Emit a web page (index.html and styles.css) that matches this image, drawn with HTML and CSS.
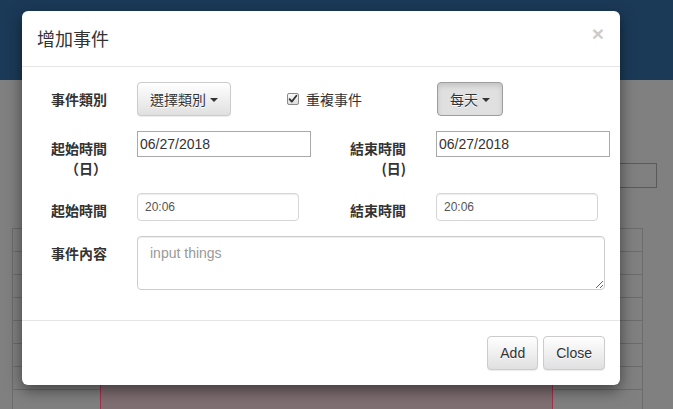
FILE: index.html
```html
<!DOCTYPE html>
<html lang="zh-Hant">
<head>
<meta charset="utf-8">
<title>增加事件</title>
<link rel="stylesheet" href="styles.css">
</head>
<body>
<div class="page">
  <div class="navbar"></div>
  <div class="toolbar"><div class="search"></div></div>
  <div class="calendar">
    <div class="event-block"></div>
  </div>
</div>

<div class="modal">
  <div class="modal-header">
    <span class="close">×</span>
    <h4 class="modal-title">增加事件</h4>
  </div>
  <div class="modal-body">
    <div class="row row-first">
      <label class="control-label">事件類別</label>
      <button class="btn">選擇類別 <span class="caret"></span></button>
      <span class="check">
        <svg class="checkbox" width="12" height="12" viewBox="0 0 12 12">
          <defs>
            <linearGradient id="cbg" x1="0" y1="0" x2="0" y2="1">
              <stop offset="0" stop-color="#fbfbfb"/>
              <stop offset="1" stop-color="#dcdcdc"/>
            </linearGradient>
          </defs>
          <rect x="0.5" y="0.5" width="11" height="11" rx="1.5" fill="url(#cbg)" stroke="#8a8a8a"/>
          <path d="M2.6 6.2 L4.8 8.6 L9.4 2.8" fill="none" stroke="#333" stroke-width="1.8" stroke-linecap="round" stroke-linejoin="round"/>
        </svg>
        <span class="check-text">重複事件</span>
      </span>
      <button class="btn btn-active">每天 <span class="caret"></span></button>
    </div>
    <div class="row grid">
      <label class="control-label">起始時間（日）</label>
      <input class="date-input" type="text" value="06/27/2018">
      <label class="control-label">結束時間(日)</label>
      <input class="date-input" type="text" value="06/27/2018">
    </div>
    <div class="row grid">
      <label class="control-label">起始時間</label>
      <input class="time-input" type="text" value="20:06">
      <label class="control-label">結束時間</label>
      <input class="time-input" type="text" value="20:06">
    </div>
    <div class="row grid">
      <label class="control-label">事件內容</label>
      <textarea class="content-input" placeholder="input things"></textarea>
    </div>
  </div>
  <div class="modal-footer">
    <button class="btn">Add</button>
    <button class="btn">Close</button>
  </div>
</div>
</body>
</html>
```
FILE: styles.css
```css
html, body {
  margin: 0;
  padding: 0;
}
body {
  width: 673px;
  height: 409px;
  overflow: hidden;
  background: #808080;
  font-family: "Liberation Sans", "Noto Sans CJK TC", sans-serif;
  font-size: 14px;
  color: #333;
  position: relative;
}

/* background page (seen under backdrop) */
.page {
  height: 409px;
  display: flex;
  flex-direction: column;
  overflow: hidden;
}
.navbar {
  height: 80px;
  background: #1b3a58;
  flex: none;
}
.toolbar {
  display: flex;
  justify-content: flex-end;
  padding: 83px 16px 0 0;
  flex: none;
}
.search {
  width: 180px;
  height: 23px;
  border: 1px solid #5a5a5a;
}
.calendar {
  flex: 1;
  min-height: 0;
  display: flex;
  flex-direction: column;
  margin: 40px 0 0 12px;
  width: 629px;
  border-left: 1px solid #6c6c6c;
  border-right: 1px solid #6c6c6c;
  background: repeating-linear-gradient(to bottom, #6c6c6c 0, #6c6c6c 1px, transparent 1px, transparent 23px);
}
.event-block {
  flex: 1;
  margin: 100px 0 0 87px;
  width: 451px;
  background: #7f6e72;
  border: 1px solid #a3304f;
  border-bottom: none;
}

/* modal */
.modal {
  position: absolute;
  left: 22px;
  top: 11px;
  width: 598px;
  background: #fff;
  border-radius: 6px;
  box-shadow: 0 5px 15px rgba(0, 0, 0, 0.5);
}
.modal-header {
  padding: 15px;
  border-bottom: 1px solid #e5e5e5;
}
.modal-title {
  margin: 0;
  font-family: "Noto Sans CJK TC", sans-serif;
  font-size: 18px;
  font-weight: 400;
  line-height: 25px;
  color: #333;
}
.close {
  float: right;
  font-family: "Liberation Sans", sans-serif;
  font-size: 21px;
  font-weight: 700;
  line-height: 1;
  color: #000;
  opacity: 0.2;
  margin-top: -3px;
  margin-right: 1px;
}
.modal-body {
  padding: 15px 10px 15px 15px;
}
.row {
  margin-bottom: 15px;
}
.row-first {
  display: flex;
  align-items: flex-start;
}
.grid {
  display: grid;
  grid-template-columns: 70px 174px 65px 174px;
  column-gap: 30px;
  align-items: start;
}
.control-label {
  font-family: "Noto Sans CJK TC", sans-serif;
  font-weight: 700;
  font-size: 14px;
  line-height: 20px;
  padding-top: 7px;
  text-align: right;
  color: #333;
}
.row-first .control-label {
  width: 70px;
  flex: none;
  margin-right: 30px;
}

.btn {
  font-family: "Noto Sans CJK TC", "Liberation Sans", sans-serif;
  font-size: 14px;
  line-height: 20px;
  color: #333;
  padding: 6px 12px;
  height: 34px;
  border: 1px solid #ccc;
  border-radius: 4px;
  background-image: linear-gradient(to bottom, #fff 0, #e0e0e0 100%);
  text-shadow: 0 1px 0 #fff;
  box-shadow: inset 0 1px 0 rgba(255, 255, 255, 0.15), 0 1px 1px rgba(0, 0, 0, 0.075);
  display: inline-flex;
  align-items: center;
  gap: 4px;
  cursor: pointer;
}
.btn-active {
  background-image: none;
  background: #e0e0e0;
  border-color: #9d9d9d;
  box-shadow: inset 0 3px 5px rgba(0, 0, 0, 0.125);
}
.caret {
  display: inline-block;
  width: 0;
  height: 0;
  border-top: 4px solid #333;
  border-left: 4px solid transparent;
  border-right: 4px solid transparent;
  margin-top: 1px;
}
.check {
  display: flex;
  align-items: center;
  margin-left: 56px;
  margin-right: 75px;
  height: 34px;
  font-family: "Noto Sans CJK TC", sans-serif;
}
.checkbox {
  display: block;
  margin-right: 7px;
}
.check-text {
  font-size: 14px;
  color: #333;
}

.date-input {
  box-sizing: border-box;
  width: 174px;
  height: 26px;
  border: 1px solid #a9a9a9;
  border-radius: 0;
  padding: 1px 2px;
  font-family: "Liberation Sans", sans-serif;
  font-size: 14px;
  color: #333;
  margin: 0;
}
.time-input {
  box-sizing: border-box;
  width: 162px;
  height: 28px;
  border: 1px solid #d6d6d6;
  border-radius: 4px;
  padding: 0 7px;
  font-family: "Liberation Sans", sans-serif;
  font-size: 12px;
  color: #555;
  margin: 0;
  box-shadow: inset 0 1px 1px rgba(0, 0, 0, 0.075);
}
.content-input {
  grid-column: 2 / 5;
  box-sizing: border-box;
  width: 468px;
  height: 54px;
  border: 1px solid #ccc;
  border-radius: 4px;
  padding: 6px 12px;
  font-family: "Liberation Sans", sans-serif;
  font-size: 14px;
  line-height: 20px;
  color: #555;
  margin: 0;
  box-shadow: inset 0 1px 1px rgba(0, 0, 0, 0.075);
}
.content-input::placeholder {
  color: #999;
}

.modal-footer {
  padding: 15px;
  border-top: 1px solid #e5e5e5;
  display: flex;
  justify-content: flex-end;
  gap: 5px;
}
.modal-footer .btn {
  font-family: "Liberation Sans", sans-serif;
}
```
